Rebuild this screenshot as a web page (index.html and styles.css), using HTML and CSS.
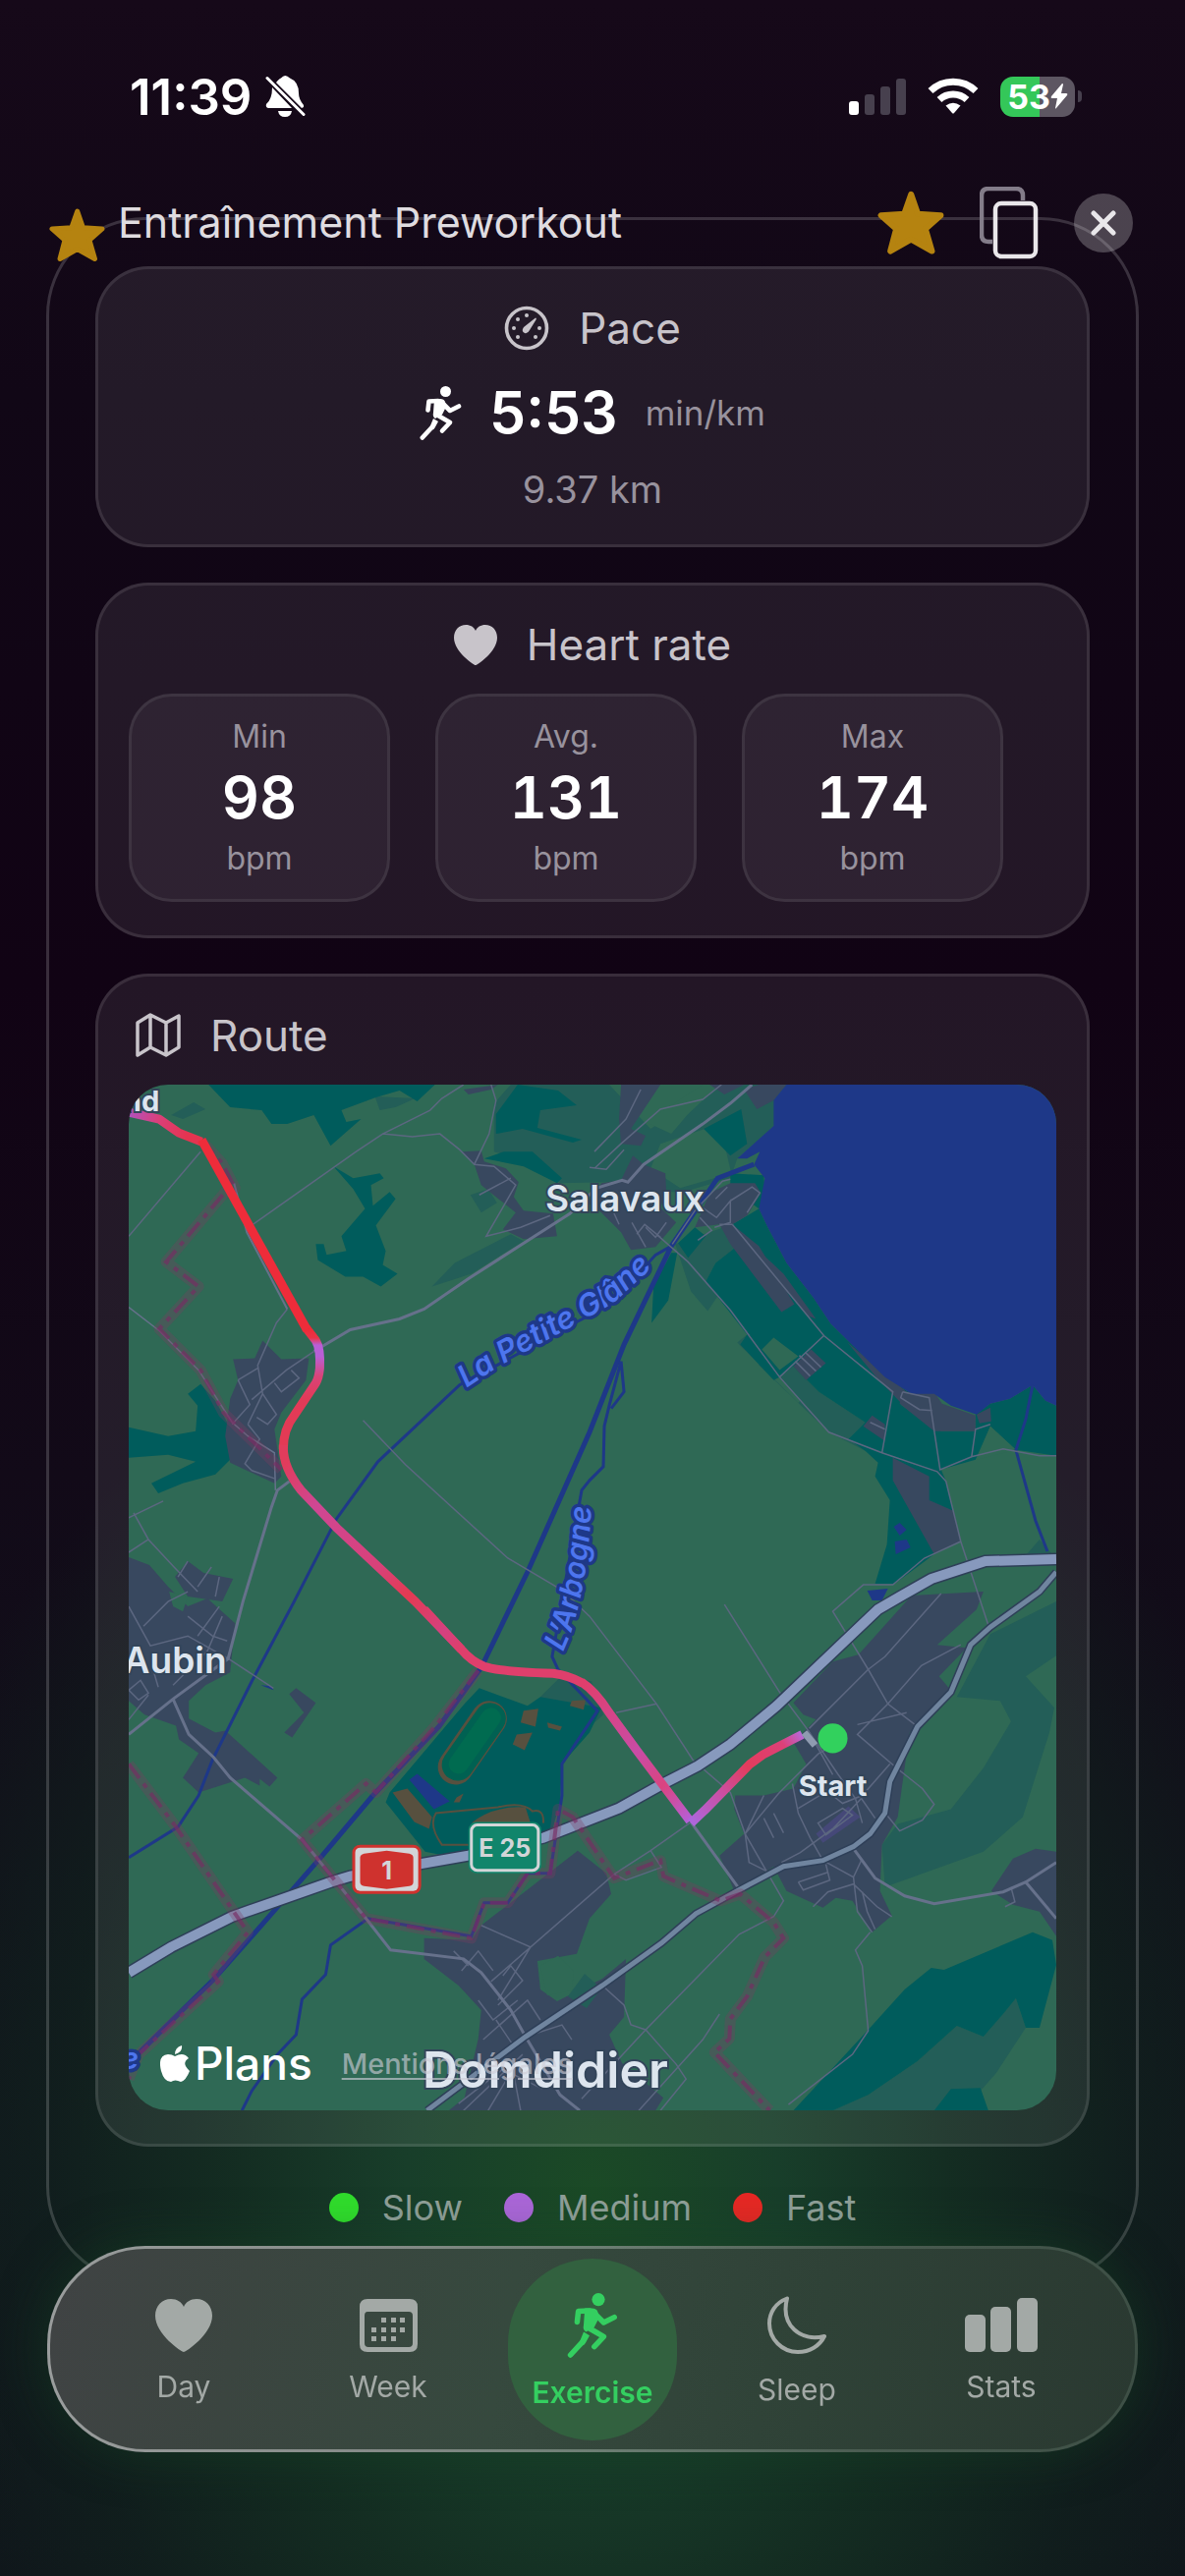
FILE: index.html
```html
<!DOCTYPE html>
<html lang="en">
<head>
    <meta charset="UTF-8">
    <meta name="viewport" content="width=device-width, initial-scale=1.0">
    <title>Exercise</title>
    <link rel="stylesheet" href="styles.css">
</head>
<body>
    <svg class="defs" aria-hidden="true">
        <symbol id="star" viewBox="0 0 57 55">
            <path d="M28.7 3 34.5 19.8 54 21 41 32.5 46.5 51.5 28.7 41.5 11 51.5 16 32.5 3 21 22.8 19.8Z" fill="currentColor" stroke="currentColor" stroke-width="5" stroke-linejoin="round"/>
        </symbol>
        <symbol id="heart" viewBox="0 0 58 54">
            <path d="M29 54C27 54 0 36 0 17 0 7 7 0 16 0c6 0 11 3 13 8C31 3 36 0 42 0c9 0 16 7 16 17 0 19-27 37-29 37Z" fill="currentColor"/>
        </symbol>
        <symbol id="runner" viewBox="0 0 43 55">
            <circle cx="26.5" cy="5.5" r="5.5" fill="currentColor"/>
            <g fill="none" stroke="currentColor" stroke-width="4.6" stroke-linecap="round" stroke-linejoin="round">
                <path d="M8.5 24.5 9.5 15.5 19 15"/>
                <path d="M23 17 31 25 40 20.5"/>
                <path d="M19 30 31 37 23 45.5"/>
                <path d="M12.5 42 2.8 52.5"/>
            </g>
            <path d="M15 13h6q4 0 5 3l1 5-4 8-7 4q-3-2-2-6Z" fill="currentColor"/>
            <path d="M14 33l5 3-3.5 6.5q-1 2-3 2l-2-3Z" fill="currentColor"/>
        </symbol>
    </svg>

    <div class="status">
        <div class="status-left">
            <span class="clock">11:39</span>
            <svg width="41" height="44" viewBox="0 0 41 44" fill="#fff">
                <path d="M11 8Q14 4 16 3.5 20 -1.5 25 3.5 34 7 34 19 34 25 39 31V33L37 34Z"/>
                <path d="M7 13 27 34H3Q0 33 1 30 7 25 7 13Z"/>
                <path d="M13 37H27Q26 43 20 43 14 43 13 37Z"/>
                <path d="M2 3.5 39 40.5" fill="none" stroke="#fff" stroke-width="3" stroke-linecap="round"/>
            </svg>
        </div>
        <div class="status-right">
            <svg width="58" height="37" viewBox="0 0 58 37" fill="#47404e">
                <rect x="0" y="23" width="10" height="14" rx="3" fill="#fff"/>
                <rect x="16" y="16" width="10" height="21" rx="3"/>
                <rect x="32" y="8" width="10" height="29" rx="3"/>
                <rect x="48" y="0" width="10" height="37" rx="3"/>
            </svg>
            <svg width="52" height="38" viewBox="0 0 52 38">
                <g fill="none" stroke="#fff" stroke-width="7">
                    <path d="M3 13.5a33 33 0 0 1 46 0"/>
                    <path d="M12 22.5a20.5 20.5 0 0 1 28 0"/>
                </g>
                <path d="M18.5 28.5Q26 23 33.5 28.5L27 36q-1 1-2 0Z" fill="#fff"/>
            </svg>
            <div class="battery">
                <span>53</span>
                <svg width="18" height="26" viewBox="0 0 18 26" fill="#fff"><path d="M12 0 1 13q-1 2 1 2h5L5 25q0 1 1 0L17 12q1-2-1-2h-5L13 1q0-1-1-1Z"/></svg>
            </div>
        </div>
    </div>

    <header class="topbar">
        <h1>Entraînement Preworkout</h1>
        <button class="icon-btn gold" aria-label="Favorite"><svg width="68" height="66"><use href="#star"/></svg></button>
        <button class="icon-btn" aria-label="Copy">
            <svg width="60" height="74" viewBox="0 0 60 74" fill="none" stroke-width="4.5">
                <path d="M13 56H9q-7 0-7-7V9q0-7 7-7h28q7 0 7 7v5" stroke="#837c89"/>
                <rect x="16" y="17" width="41" height="54" rx="6" stroke="#e9e7ea"/>
            </svg>
        </button>
        <button class="icon-btn close" aria-label="Close">
            <svg width="26" height="26" viewBox="0 0 26 26" fill="none" stroke="#e9e7ea" stroke-width="5" stroke-linecap="round"><path d="M3 3 23 23M23 3 3 23"/></svg>
        </button>
    </header>

    <main class="sheet">
        <svg class="sheet-star" width="57" height="55"><use href="#star"/></svg>

        <section class="card">
            <h2>
                <svg width="46" height="46" viewBox="0 0 46 46" fill="#c8c4ca">
                    <circle cx="23" cy="23" r="20.5" fill="none" stroke="#c8c4ca" stroke-width="3.6"/>
                    <circle cx="23" cy="10" r="2"/><circle cx="14" cy="14" r="2"/><circle cx="10" cy="23" r="2"/>
                    <circle cx="14" cy="32" r="2"/><circle cx="32" cy="32" r="2"/><circle cx="36" cy="23" r="2"/>
                    <path d="M32 12.5q1.5 0 .5 2L26 25q-2 4-5 3-4-2-1-6Z"/>
                </svg>
                Pace
            </h2>
            <p class="pace-value">
                <svg width="43" height="55"><use href="#runner"/></svg>
                <strong>5:53</strong>
                <span>min/km</span>
            </p>
            <p class="distance">9.37 km</p>
        </section>

        <section class="card">
            <h2><svg width="44" height="41"><use href="#heart"/></svg> Heart rate</h2>
            <div class="tiles">
                <div class="tile"><span>Min</span><strong>98</strong><span>bpm</span></div>
                <div class="tile"><span>Avg.</span><strong>131</strong><span>bpm</span></div>
                <div class="tile"><span>Max</span><strong>174</strong><span>bpm</span></div>
            </div>
        </section>

        <section class="card">
            <h2 class="left">
                <svg width="46" height="46" viewBox="0 0 46 46" fill="none" stroke="#c8c4ca" stroke-width="3.5" stroke-linejoin="round">
                    <path d="M2 10 15 2 31 10 44 3V35L31 43 15 35 2 43ZM15 2V35M31 10V43"/>
                </svg>
                Route
            </h2>
            <div class="map">
                <svg viewBox="0 0 942 1042" role="img" aria-label="Route map">
                    <defs>
                        <linearGradient id="g1" gradientUnits="userSpaceOnUse" x1="0" y1="28" x2="60" y2="50">
                            <stop offset="0" stop-color="#b052c0"/><stop offset=".5" stop-color="#dc3f78"/><stop offset="1" stop-color="#e43450"/>
                        </linearGradient>
                        <linearGradient id="g2" gradientUnits="userSpaceOnUse" x1="0" y1="247" x2="0" y2="350">
                            <stop offset="0" stop-color="#ee2a35"/><stop offset=".1" stop-color="#ea3348"/><stop offset=".17" stop-color="#b95fd6"/>
                            <stop offset=".28" stop-color="#b95fd6"/><stop offset=".48" stop-color="#d94478"/><stop offset=".7" stop-color="#e23a58"/><stop offset="1" stop-color="#e33a55"/>
                        </linearGradient>
                        <linearGradient id="g3" gradientUnits="userSpaceOnUse" x1="160" y1="384" x2="338" y2="574">
                            <stop offset="0" stop-color="#e13c5c"/><stop offset=".2" stop-color="#cf4794"/><stop offset=".55" stop-color="#d94178"/>
                            <stop offset=".7" stop-color="#e33a52"/><stop offset=".9" stop-color="#d44180"/><stop offset="1" stop-color="#e03e6a"/>
                        </linearGradient>
                        <linearGradient id="g4" gradientUnits="userSpaceOnUse" x1="461" y1="608" x2="570" y2="747">
                            <stop offset="0" stop-color="#e03e6c"/><stop offset=".5" stop-color="#c94ca6"/><stop offset=".75" stop-color="#da4480"/><stop offset="1" stop-color="#b55fd8"/>
                        </linearGradient>
                        <linearGradient id="g5" gradientUnits="userSpaceOnUse" x1="573" y1="749" x2="684" y2="660">
                            <stop offset="0" stop-color="#ad66dc"/><stop offset=".3" stop-color="#cb4ea0"/><stop offset=".55" stop-color="#e33c5c"/><stop offset=".85" stop-color="#dc4078"/><stop offset="1" stop-color="#b868d8"/>
                        </linearGradient>
                        <path id="glane" d="M343 308 376 286 455 243 492 222 560 160"/>
                        <path id="arbogne" d="M441 576Q468 520 471 400"/>
                    </defs>

                    <rect width="942" height="1042" fill="#2f6955"/>

                    <!-- meadows -->
                    <g fill="#235e58">
                        <path d="M43 31 66 18 78 25 55 35ZM250 12 291 14 271 23 255 26ZM308 205 331 181 388 152 401 159 348 192ZM347 112 365 106 374 120 358 130Z"/>
                        <path d="M371 19 388 0H435L488 0 530 45 600 0H668L655 42 618 75 611 95 560 110 488 99 438 100 405 78 371 68Z"/>
                        <path d="M555 162 590 150 613 142 618 164 596 181 586 200 600 212 588 230 571 210ZM628 254 618 262 680 323 688 315 748 372 711 353 640 285ZM661 297 675 286 701 312 748 343 731 360 748 372 711 353Z"/>
                        <path d="M875 558 942 525V580L911 601 940 633 935 658 908 744 868 779 768 815 765 772 781 751 835 736 868 694 896 647 885 626 841 622Z"/>
                        <path d="M715 1042 751 1026 801 992 841 956 868 967 888 944 901 928 911 958 881 1004 865 1022 818 1042Z"/>
                        <path d="M418 622 440 600 470 606 482 640 460 660ZM906 484 925 462 942 482Z"/>
                    </g>
                    <path d="M525 38 583 0H600L568 30 551 50ZM540 60 600 40 612 90 560 105 530 85Z" fill="#2f6955"/>

                    <!-- woods -->
                    <g fill="#005c5c">
                        <path d="M81 0 103 23 135 26 145 40H161L188 31 205 62 236 35 221 38 216 26 251 13 275 6 293 17 311 0Z"/>
                        <path d="M208 83 228 95 255 90 259 95 246 102 248 123 265 109 271 116 251 143 261 169 258 183 273 192 256 205 238 195H220L192 178 190 162H198L201 173 221 169 216 154 240 126 228 106Z"/>
                        <path d="M0 348 40 357 68 352 70 326 60 314 73 304 88 321 100 343 106 378 88 396 55 405 30 415 23 405 68 383 40 376 0 379Z"/>
                        <path d="M395 0 436 6 455 21 418 26 415 44 460 56 451 59 400 45 373 50 373 30ZM361 75 381 68H410L440 95 435 100 401 83Z"/>
                        <path d="M584 45 622 25 628 60 611 72ZM611 90 645 92 646 110 640 126 611 105Z"/>
                        <path d="M558 161 575 145 586 154 568 176ZM551 171H557L548 219 531 242 533 205Z"/>
                        <path d="M640 126 648 143 668 181 695 216 713 243 768 297 795 314 784 325 825 352H860V335L875 324 895 319 918 305 931 321 942 326V377L901 371 875 347 860 381 825 391 830 403 845 464 818 477 778 507H758L770 467 773 422 758 398 761 384 748 372 731 360 748 343 701 312 675 286 661 297 628 254 586 200 596 181 618 164 613 142Z"/>
                        <path d="M628 254 621 264 655 300 661 297ZM356 613 405 631 418 622 480 633 468 658 440 690 438 729 428 765 321 783 301 779 261 729 265 719 341 629Z"/>
                        <path d="M675 1042 751 960 788 919 815 897 828 899 918 861 938 869 942 894 925 958H911L901 928 888 944 868 967 841 956 801 992 751 1026 715 1042ZM818 1042 835 1020 865 1019 873 1042Z"/>
                    </g>
                    <path d="M655 257 680 276 661 290 643 269ZM861 381 875 347 901 371Z" fill="#2f6955"/>

                    <!-- built-up areas -->
                    <g fill="#38485f">
                        <path d="M340 5 375 0 368 5 345 10ZM338 68 358 67 361 78 383 85 396 99 391 114 401 128 431 131 435 154 401 157 380 147 393 130 358 102 351 81Z"/>
                        <path d="M500 0H540L510 45 525 52 520 62 500 60 498 35ZM590 0 605 10 625 0ZM625 5 640 0H668L655 16 638 25Z"/>
                        <path d="M480 100 500 97 512 72 523 81 545 90 546 110 540 125 556 140 535 165 510 168 500 150 480 130 466 120Z"/>
                        <path d="M136 260 155 279 183 278 180 300 155 333 148 350 155 398 148 405 103 384 98 357 103 319 111 300 106 279 128 278Z"/>
                        <path d="M575 145 590 110 611 100 636 100 642 110 628 133 613 142 640 164 676 223 663 231 611 162 600 142Z"/>
                        <path d="M635 164 665 192 698 238 690 235 650 190ZM693 269 708 283 688 300 675 286ZM730 262 790 312 786 325 760 298Z"/>
                        <path d="M785 312H818L826 324 860 336V352H818L783 324ZM746 347 755 336 768 345V362ZM861 335 875 328 876 342 864 344Z"/>
                        <path d="M776 379 813 398V422L838 433 845 464 818 477 776 402Z"/>
                        <path d="M0 480 21 488 40 510 60 530 80 522 108 547 103 597 78 610 61 626V644L88 658 98 656 151 704 143 713 120 695 133 705V712L118 704 71 719 55 704 71 679 51 665 48 651 16 640 0 626Z"/>
                        <path d="M60 484 76 496 106 502 95 525 60 520 47 500ZM163 619 170 613 190 628 166 663 158 658 178 638Z"/>
                        <path d="M300 867 348 869 358 854 456 778 485 801 490 822 468 847 455 883 415 890 418 919 435 931 481 908 505 888 503 947 488 965 501 994 543 1029 535 1042H325L341 1029 355 969 358 940 335 915 300 888Z"/>
                        <path d="M868 515 861 533 821 569 851 572 823 601 838 619 793 658 781 744 765 772 763 819 775 844 755 861 735 829 718 826 705 836 668 819 655 794 615 819 600 783 625 761 615 736 616 722H645L675 715 688 690 675 668 698 645 685 640 675 628 715 586 741 579 795 519Z"/>
                        <path d="M876 819 898 786 921 776 942 779V865L925 840 898 833Z"/>
                    </g>
                    <path d="M446 926 463 903 480 918 465 938Z" fill="#235e58"/>
                    <path d="M41 515 60 520 55 535 45 530ZM418 895 436 885 452 900 450 920 425 925Z" fill="#2f6955"/>
                    <path d="M698 761 731 733 743 744 705 770Z" fill="#454878"/>

                    <!-- sports ground -->
                    <path d="M366 644 332 693" fill="none" stroke="#57503f" stroke-width="36" stroke-linecap="round"/>
                    <path d="M367 644 334 691" fill="none" stroke="#006152" stroke-width="32" stroke-linecap="round"/>
                    <path d="M368 643 335 690" fill="none" stroke="#006b50" stroke-width="20" stroke-linecap="round"/>
                    <g fill="#57503f">
                        <path d="M401 636 416 634 413 652 398 648ZM425 648 440 652 438 656 426 653ZM394 660 410 658 402 676 390 670ZM450 626 464 625 462 635 448 631ZM333 724 340 720 336 729 330 729Z"/>
                        <path d="M268 719 283 715 308 744 305 756 290 749ZM348 750Q370 732 403 734L408 750Z"/>
                    </g>
                    <path d="M345 772H318Q304 752 312 740L375 734Q400 728 410 738 422 735 421 750" fill="none" stroke="#57503f" stroke-width="2"/>

                    <!-- lake and rivers -->
                    <g fill="#1e3888">
                        <path d="M942 0H668L655 16V42L618 75H628L641 68 635 81 646 95 640 126 648 143 668 181 695 216 713 243 768 297 795 314H818L835 326 861 335 875 324 895 319 918 305 931 321 942 326Z"/>
                        <path d="M777 449 783 445 790 452 783 458ZM778 464 790 462 794 470 779 477ZM750 514 771 512 765 524H755ZM285 706 293 700 326 728 310 736ZM134 610 145 611 147 615Z"/>
                    </g>
                    <g fill="none" stroke="#1e3888" stroke-width="3">
                        <path d="M551 164 535 173 490 223 455 241 374 285 336 305 253 383 211 441 168 525 125 606 85 686 71 722 50 754 0 785"/>
                        <path d="M635 81 598 95 551 164 503 264 468 353 405 495 358 592 315 652 248 722 195 785 125 865 85 910 11 983 0 992" stroke-width="5"/>
                        <path d="M500 281 488 326 483 347 482 388 468 402 460 412 430 581 436 594 476 636 440 690V722L428 801H405L385 831H361L348 865 295 856 243 847 205 874 200 904 176 929 170 965 151 985 125 1022 115 1042M500 281 503 312 490 329"/>
                        <path d="M918 305 911 340 901 371 921 443 933 474"/>
                    </g>

                    <!-- local streets -->
                    <g fill="none" stroke="#5c6780" stroke-width="1.5">
                        <path d="M0 154 73 68M126 142 231 68 258 50 306 26 318 14 340 0M258 50 288 53 316 50 336 66 351 81 371 83 393 102 363 154 398 145 428 133M368 0 373 16 366 50 351 81M388 95 356 112M161 228 150 242 131 285 136 314 121 345M111 300 131 288M188 271 160 290 125 320M111 300 123 325 105 345M165 290 173 298 155 312 148 303M136 314 150 335 141 345 130 338M121 345 133 360 118 385 125 392 148 400"/>
                        <path d="M238 341 281 386 385 481 441 514 468 540 536 629 573 686 611 719 626 761 665 829 655 845 620 863 525 960 460 1030M605 528 661 617 690 656 715 701M536 629 495 638"/>
                        <path d="M536 152 568 180 611 229 661 297 711 353 765 374 821 393 830 403 845 464 873 549M613 142 706 255 776 312 765 374M706 255 661 297M786 312 784 318 803 330 816 331M786 312 813 318 824 391 856 378 888 370 925 377H942M856 378 860 350 875 345M753 343 768 350M845 464 808 481 776 508H746L715 535 751 594 771 629 801 652"/>
                        <path d="M681 275 698 291M687 272 703 287M677 281 692 296M552 162 575 128 603 98 611 96M583 125 597 135 611 118 611 140 595 145M580 135 592 148 578 158M596 116 608 104M600 142 613 142M611 118 633 104 641 110 628 130"/>
                        <path d="M473 85 500 60 540 25 583 15 602 0M473 68 505 35 520 5M468 84 485 86 503 66M511 140 525 165M488 120 498 142M525 145 535 155 546 140M516 152 524 142 540 155"/>
                        <path d="M0 440 35 423M5 435 20 462 46 490 70 515M0 475 20 462M60 484 50 500M84 490 70 510M92 500 88 520M0 530 22 570 60 560 101 583M15 550 40 525 60 515M45 610 80 575 95 540M30 612 25 595M0 615 12 605 20 618 10 625ZM0 645 20 620M101 583 147 613M60 540 85 560 100 565M70 560 92 530"/>
                        <path d="M845 569 805 590 771 629 740 660 781 695 806 715 818 731 806 747 783 758 770 742M740 650 790 638M691 654 751 594 768 581 825 517M690 656 720 700 738 725 745 750M645 722 626 761 630 790 650 800M626 761 660 720 700 680 725 665M655 740 665 760M645 745 655 765M663 790 682 780 716 755 744 725M674 710 680 740 692 765 705 788M680 735 705 720M706 715 725 730 745 722 773 690M700 750 725 735 735 742 708 762ZM744 725 758 745"/>
                        <path d="M493 802 530 778 571 749M530 778 541 795 505 808 493 802 368 911M358 854 408 876 375 930M330 880 345 895M338 900 355 880 370 900M380 905 388 895 400 910 375 935M355 930 370 950 395 930M360 970 405 930 418 950M373 950 390 975M403 967 440 955 450 970M525 960 556 995 566 1010 540 1042M600 944 583 970 518 1042M481 915 503 935 510 955 525 960M335 1035 380 1000 420 1020M365 1042 390 1000 398 1042M340 1042 400 985"/>
                        <path d="M753 861 738 879 745 895 751 961 735 985 670 1036M705 788 736 805 744 788M736 805 740 840 755 861M695 835 710 820 736 812 760 835 775 845M745 820 750 840 758 858M680 810 710 800 708 792M680 810 685 818 712 808 708 792M896 815 900 830 890 835"/>
                    </g>

                    <!-- main roads -->
                    <g fill="none" stroke="#66718b" stroke-width="3">
                        <path d="M188 271 225 249 275 238 300 228 345 197 448 131 475 105 501 97 507 99 523 81 583 40 611 19 633 0"/>
                        <path d="M0 226 31 250 71 290 105 343 121 357 148 374 149 412" stroke-width="1.5"/>
                        <path d="M161 228 120 150 107 100" stroke-width="2"/>
                        <path d="M163 403 151 412 145 429 116 525 101 583 45 624 0 660M45 624 61 660 86 683 103 704 176 767 241 847 266 879 340 888 358 902 388 940 403 967 438 1026 458 1042M571 749 620 817M736 776 758 806 788 824 818 832 888 820 911 810 942 790M911 810 942 847"/>
                    </g>
                    <path d="M303 1042 403 967 481 915 541 872 576 842 618 819 665 794 705 788 736 774 753 761 768 740 773 708 801 652 835 617 855 569 875 551 925 515 942 495" fill="none" stroke="#2e3f58" stroke-width="8"/>
                    <path d="M303 1042 403 967 481 915 541 872 576 842 618 819 665 794 705 788 736 774 753 761 768 740 773 708 801 652 835 617 855 569 875 551 925 515 942 495" fill="none" stroke="#70859f" stroke-width="5"/>
                    <path d="M0 902 43 876 105 845 151 829 205 810 225 804 345 783 421 765 498 735 541 711 578 692 611 670 658 631 761 533 785 519 815 502 870 484 942 482" fill="none" stroke="#2e3f58" stroke-width="13"/>
                    <path d="M0 902 43 876 105 845 151 829 205 810 225 804 345 783 421 765 498 735 541 711 578 692 611 670 658 631 761 533 785 519 815 502 870 484 942 482" fill="none" stroke="#8799bd" stroke-width="10"/>

                    <!-- district borders -->
                    <g class="border-band">
                        <path d="M74 57 95 80 108 105 98 109 38 180 71 205 31 248 73 290 96 333 155 391"/>
                        <path d="M0 690 48 754 121 861 86 904 91 911 10 985 0 1010"/>
                        <path d="M355 595 311 652 251 719 241 710 176 767 241 847 348 867 361 831H385L405 801H428L436 736 451 744 493 806 540 788 543 804 601 829 621 822 655 851 665 867 646 886 628 926 611 949 610 969 595 983 651 1042"/>
                    </g>
                    <g class="border-line">
                        <path d="M74 57 95 80 108 105 98 109 38 180 71 205 31 248 73 290 96 333 155 391"/>
                        <path d="M0 690 48 754 121 861 86 904 91 911 10 985 0 1010"/>
                        <path d="M355 595 311 652 251 719 241 710 176 767 241 847 348 867 361 831H385L405 801H428L436 736 451 744 493 806 540 788 543 804 601 829 621 822 655 851 665 867 646 886 628 926 611 949 610 969 595 983 651 1042"/>
                    </g>

                    <!-- recorded route -->
                    <g fill="none" stroke-width="9" stroke-linejoin="round">
                        <path d="M0 28 31 35 51 49 74 58" stroke="url(#g1)"/>
                        <path d="M300 533 338 574Q348 586 361 591 375 596 431 598 447 600 461 608" stroke="#df3f6c"/>
                        <path d="M180 247 190 260Q195 268 194 288 193 298 190 303L168 336Q157 350 157 370" stroke="url(#g2)"/>
                        <path d="M157 366Q156 388 175 412L211 450 291 525 338 574" stroke="url(#g3)"/>
                        <path d="M460 607Q474 616 488 638L518 679 570 748" stroke="url(#g4)"/>
                        <path d="M571 750 585 737 631 690 645 680 684 660" stroke="url(#g5)"/>
                        <path d="M686 658 697 671" stroke="#8f9bb0" stroke-width="7"/>
                        <path d="M74 56 181 249" stroke="#ee2c3a"/>
                    </g>
                    <circle cx="715" cy="664" r="15" fill="#32d15d"/>

                    <!-- road shields -->
                    <rect x="227" y="772" width="70" height="50" rx="8" fill="#cf322e"/>
                    <rect x="230" y="775" width="64" height="44" rx="5" fill="#d3d5d8"/>
                    <path d="M235 785Q235 782 239 781L262 778 285 781Q289 782 289 785V810Q289 813 285 814L262 817 239 814Q235 813 235 810Z" fill="#cf322e"/>
                    <text class="shield" x="262" y="807">1</text>
                    <rect x="345" y="749" width="74" height="52" rx="8" fill="#11856b"/>
                    <rect x="348" y="752" width="68" height="46" rx="6" fill="#11856b" stroke="#d3d5d8" stroke-width="3"/>
                    <text class="shield" x="382" y="784">E 25</text>

                    <!-- place names -->
                    <text class="place" x="504" y="129">Salavaux</text>
                    <text class="place" x="47" y="598">Aubin</text>
                    <text class="place small" x="13" y="27">nd</text>
                    <text class="place big" x="423" y="1019">Domdidier</text>
                    <text class="place small" x="715" y="722">Start</text>
                    <text class="river"><textPath href="#glane">La Petite Glâne</textPath></text>
                    <text class="river"><textPath href="#arbogne">L’Arbogne</textPath></text>
                    <text class="river" x="-8" y="1000">e</text>
                </svg>
                <div class="attribution">
                    <span class="brand">
                        <svg width="31" height="37" viewBox="0 0 31 37" fill="#fff">
                            <path d="M22 0Q23 7 15 9 15 2 22 0ZM8 9Q12 9 15 11 24 6 29 13 21 18 30 26 26 36 21 37 15 34 11 37 4 37 1 26-3 10 8 9Z"/>
                        </svg>Plans
                    </span>
                    <a href="#">Mentions légales</a>
                </div>
            </div>
        </section>

        <ul class="legend">
            <li><i class="slow"></i>Slow</li>
            <li><i class="medium"></i>Medium</li>
            <li><i class="fast"></i>Fast</li>
        </ul>
    </main>

    <nav class="tabs">
        <a href="#"><svg width="58" height="54"><use href="#heart"/></svg>Day</a>
        <a href="#">
            <svg width="59" height="54" viewBox="0 0 59 54" fill="currentColor">
                <path fill-rule="evenodd" d="M8 0H51Q59 0 59 8V46Q59 54 51 54H8Q0 54 0 46V8Q0 0 8 0ZM8 13Q5 13 5 17V45Q5 49 9 49H50Q54 49 54 45V17Q54 13 50 13Z"/>
                <path d="M22 19h5v5h-5zM32 19h5v5h-5zM41 19h5v5h-5zM12 29h5v5h-5zM22 29h5v5h-5zM32 29h5v5h-5zM41 29h5v5h-5zM12 38h5v5h-5zM22 38h5v5h-5zM32 38h5v5h-5z"/>
            </svg>
            Week
        </a>
        <a href="#" class="active"><svg width="52" height="66"><use href="#runner"/></svg>Exercise</a>
        <a href="#">
            <svg width="60" height="60" viewBox="0 0 60 60" fill="none" stroke="currentColor" stroke-width="4" stroke-linejoin="round">
                <path d="M20 2.5C8 7 2 17 2 28 2 44 15 57 31 57 43 57 53 51 58 41 34 47 13 30 20 2.5Z"/>
            </svg>
            Sleep
        </a>
        <a href="#">
            <svg width="74" height="55" viewBox="0 0 74 55" fill="currentColor">
                <rect x="0" y="17" width="21" height="38" rx="5"/>
                <rect x="26" y="9" width="21" height="46" rx="5"/>
                <rect x="53" y="0" width="21" height="55" rx="5"/>
            </svg>
            Stats
        </a>
    </nav>
</body>
</html>
```

FILE: styles.css
```css
* {
    box-sizing: border-box;
}

body {
    font-family: Inter, Roboto, sans-serif;
    margin: 0;
    min-height: 100vh;
    color: white;
    background:
        radial-gradient(ellipse 760px 940px at 50% 2230px, #1b4a26 0%, #183e2a 25%, rgba(20, 46, 34, 0.95) 48%, rgba(17, 34, 30, 0.7) 72%, rgba(16, 24, 28, 0) 100%),
        linear-gradient(#160919 0px, #110716 400px, #110314 1000px, #120a18 1500px, #10151c 2200px, #0f131a 2622px);
}

svg {
    display: block;
    flex: none;
}

h1, h2, p, ul {
    margin: 0;
    padding: 0;
    font-weight: normal;
}

.defs {
    position: absolute;
    width: 0;
    height: 0;
}

/* status bar */
.status {
    display: flex;
    justify-content: space-between;
    align-items: center;
    padding: 66px 106px 0 132px;
    height: 130px;
}

.status-left, .status-right {
    display: flex;
    align-items: center;
}

.status-left {
    gap: 14px;
}

.status-right {
    gap: 22px;
}

.clock {
    font-size: 51px;
    font-weight: 600;
}

.battery {
    position: relative;
    display: flex;
    align-items: center;
    justify-content: center;
    width: 76px;
    height: 41px;
    margin-right: 6px;
    border-radius: 13px;
    background: linear-gradient(90deg, #34c759 53%, #5d5662 53%);
    font-size: 34px;
    font-weight: 700;
}

.battery::after {
    content: "";
    position: absolute;
    right: -7px;
    width: 4px;
    height: 12px;
    border-radius: 0 4px 4px 0;
    background: #47404e;
}

/* title row, drawn over the top edge of the sheet */
.topbar {
    position: relative;
    z-index: 1;
    display: flex;
    align-items: center;
    gap: 36px;
    height: 74px;
    margin: 60px 53px -43px 120px;
}

.topbar h1 {
    flex: 1;
    padding-bottom: 3px;
    font-size: 43px;
    color: #dfdce0;
}

.icon-btn {
    display: flex;
    align-items: center;
    justify-content: center;
    padding: 0;
    border: none;
    background: none;
    cursor: pointer;
}

.gold {
    color: #b58310;
}

.close {
    width: 60px;
    height: 60px;
    border-radius: 50%;
    background: rgba(255, 255, 255, 0.24);
}

/* sheet and cards */
.sheet {
    position: relative;
    margin: 0 47px;
    padding: 47px 47px 53px;
    border: 3px solid rgba(255, 255, 255, 0.17);
    border-radius: 100px;
}

.sheet-star {
    position: absolute;
    left: 0;
    top: -12px;
    color: #b58310;
}

.card {
    margin-bottom: 36px;
    padding: 34px 31px;
    border: 3px solid rgba(255, 255, 255, 0.1);
    border-radius: 54px;
    background: rgba(255, 255, 255, 0.08);
}

.card h2 {
    display: flex;
    align-items: center;
    justify-content: center;
    gap: 30px;
    margin-bottom: 24px;
    font-size: 44px;
    line-height: 52px;
    color: #c8c4ca;
}

.card h2.left {
    justify-content: flex-start;
    padding-left: 7px;
}

.pace-value {
    display: flex;
    align-items: center;
    justify-content: center;
    gap: 28px;
    margin-bottom: 20px;
    line-height: 72px;
}

.pace-value strong {
    font-size: 59px;
    font-weight: 600;
}

.pace-value span {
    font-size: 35px;
    color: #98929d;
}

.distance {
    font-size: 38px;
    line-height: 44px;
    text-align: center;
    color: #98929d;
}

.tiles {
    display: grid;
    grid-template-columns: repeat(3, 1fr);
    gap: 46px;
    padding-right: 54px;
}

.tile {
    display: flex;
    flex-direction: column;
    align-items: center;
    gap: 4px;
    padding: 21px;
    border: 3px solid rgba(255, 255, 255, 0.08);
    border-radius: 44px;
    background: rgba(255, 255, 255, 0.05);
}

.tile span {
    font-size: 32px;
    line-height: 40px;
    color: #98929d;
}

.tile strong {
    font-size: 59px;
    font-weight: 600;
    line-height: 76px;
    font-variant-numeric: tabular-nums;
}

/* map */
.map {
    position: relative;
    overflow: hidden;
    border-radius: 40px;
}

.map > svg {
    width: 100%;
    height: auto;
}

.border-band path {
    fill: none;
    stroke: rgba(125, 60, 95, 0.3);
    stroke-width: 11px;
    stroke-linejoin: round;
}

.border-line path {
    fill: none;
    stroke: rgba(120, 45, 100, 0.65);
    stroke-width: 4px;
    stroke-dasharray: 18px 7px 5px 7px;
}

.place {
    font-size: 37px;
    font-weight: 600;
    text-anchor: middle;
    fill: #dde5ee;
    stroke: #33455a;
    stroke-width: 4px;
    paint-order: stroke;
}

.place.small {
    font-size: 29px;
    font-weight: 700;
}

.place.big {
    font-size: 50px;
}

.river {
    font-size: 31px;
    font-weight: 600;
    font-style: italic;
    fill: #4d75ee;
    stroke: #1e3888;
    stroke-width: 7px;
    stroke-linejoin: round;
    paint-order: stroke;
}

.shield {
    font-size: 25px;
    font-weight: 700;
    text-anchor: middle;
    fill: #d3d5d8;
}

.attribution {
    position: absolute;
    left: 32px;
    bottom: 20px;
    display: flex;
    align-items: center;
    gap: 30px;
}

.brand {
    display: flex;
    align-items: center;
    gap: 4px;
    font-size: 46px;
    font-weight: 500;
}

.attribution a {
    font-size: 29px;
    font-weight: 500;
    color: rgba(205, 205, 215, 0.65);
    text-underline-offset: 4px;
}

.legend {
    display: flex;
    justify-content: center;
    gap: 42px;
    padding-top: 4px;
    list-style: none;
    font-size: 36px;
    line-height: 44px;
    color: #8f9f98;
}

.legend li {
    display: flex;
    align-items: center;
    gap: 24px;
}

.legend i {
    width: 30px;
    height: 30px;
    border-radius: 50%;
}

.slow {
    background: #30dc2c;
}

.medium {
    background: #ab66d8;
}

.fast {
    background: #e62824;
}

/* bottom tabs */
.tabs {
    position: fixed;
    left: 48px;
    right: 48px;
    bottom: 126px;
    z-index: 2;
    display: grid;
    grid-template-columns: repeat(5, 1fr);
    align-items: center;
    height: 210px;
    padding: 0 32px;
    border: 3px solid transparent;
    border-radius: 100px;
    background:
        linear-gradient(100deg, #404344 0%, #3b4540 18%, #36493e 42%, #2f4237 70%, #2a3931 100%) padding-box,
        linear-gradient(90deg, #9a9d9d 0%, #858b88 30%, #6d7f74 50%, #4a5c51 75%, #3d4f45 100%) border-box;
    box-shadow: 0 0 50px rgba(22, 66, 36, 0.5);
}

.tabs a {
    display: flex;
    flex-direction: column;
    align-items: center;
    justify-content: center;
    gap: 17px;
    justify-self: center;
    width: 172px;
    height: 185px;
    padding-top: 4px;
    border-radius: 86px;
    font-size: 30px;
    line-height: 36px;
    color: #a3a9a6;
    text-decoration: none;
}

.tabs a.active {
    background: #32613f;
    color: #34cf60;
    font-weight: 600;
}
```
